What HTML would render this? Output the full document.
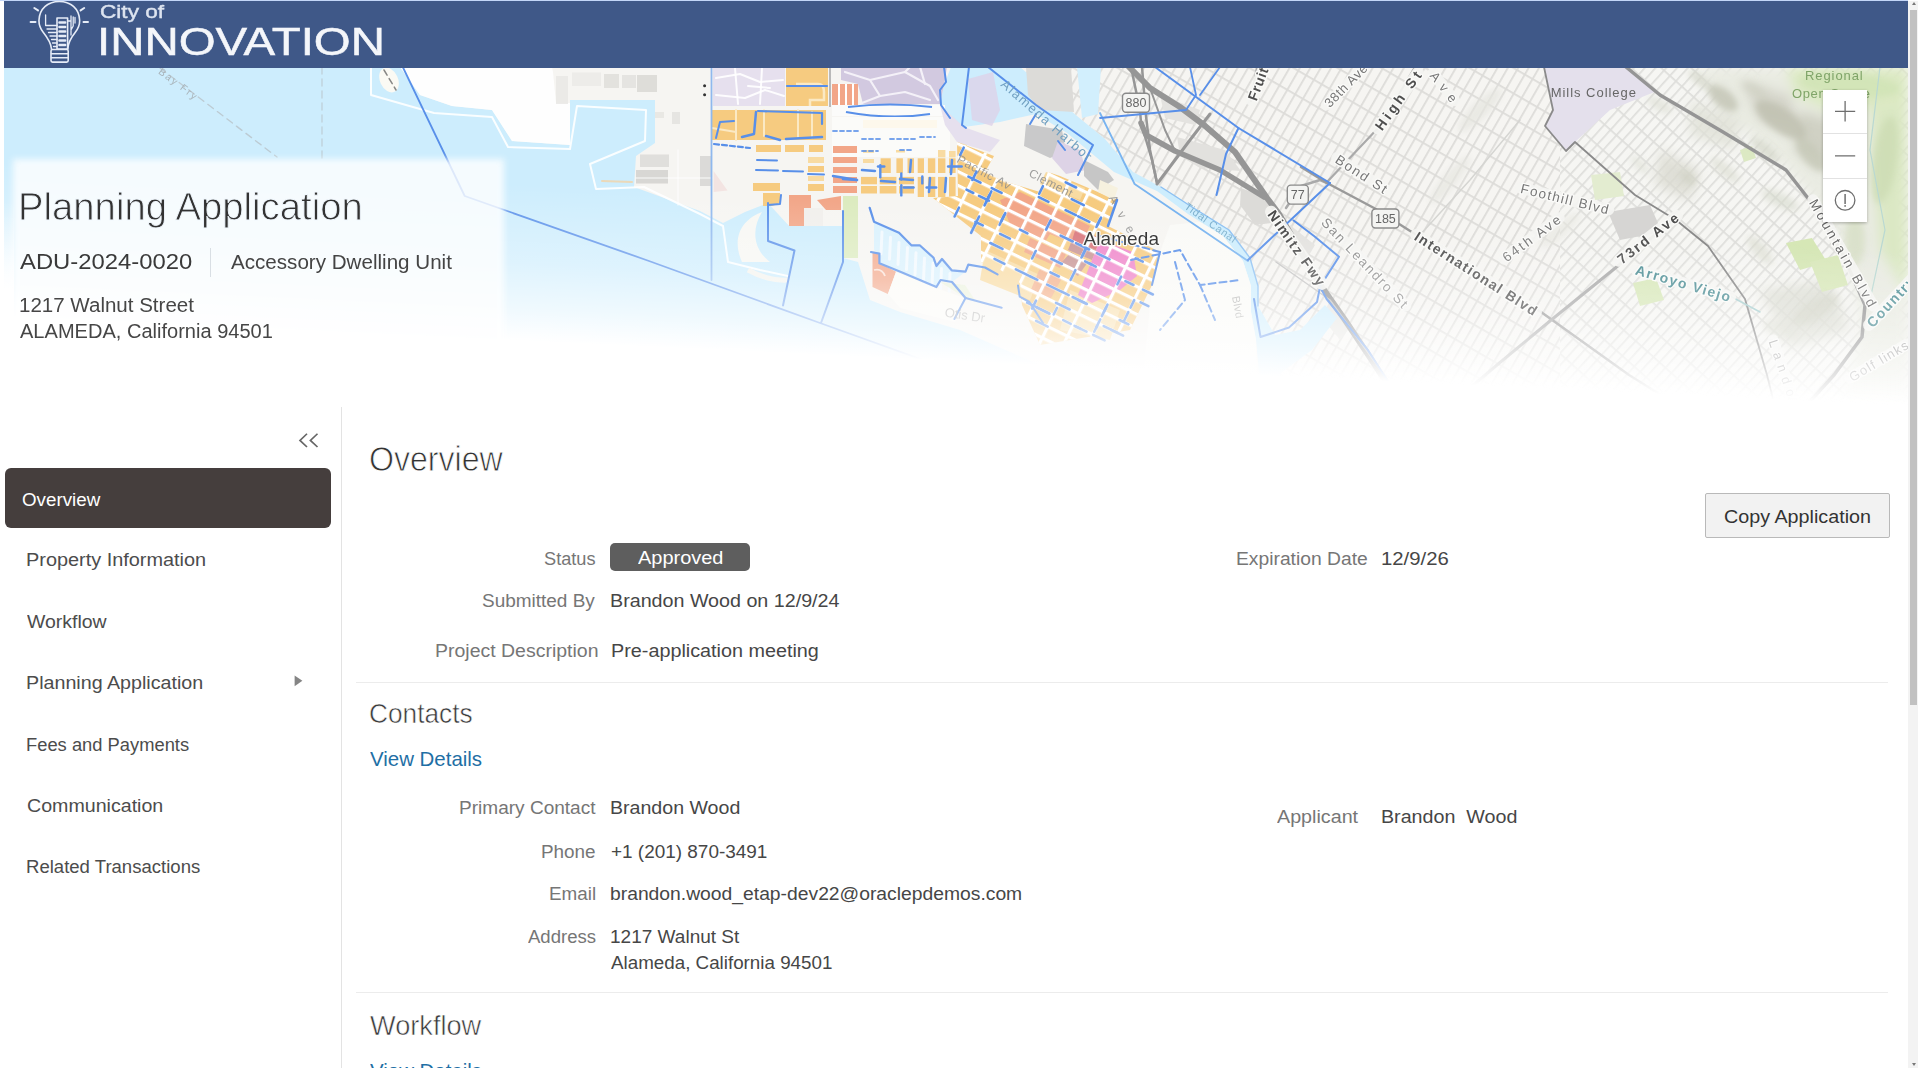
<!DOCTYPE html>
<html lang="en">
<head>
<meta charset="utf-8">
<title>Planning Application - ADU-2024-0020</title>
<style>
*{box-sizing:border-box;margin:0;padding:0}
html,body{width:1920px;height:1080px;overflow:hidden;background:#fff}
body{font-family:"Liberation Sans",sans-serif;color:#333;position:relative}
#app{position:absolute;left:4px;top:1px;width:1904px;height:1067px;overflow:hidden;background:#fff}
#hdr{position:absolute;left:0;top:0;width:1904px;height:67px;background:#3f5888;overflow:hidden}
#map{position:absolute;left:0;top:66px;width:1904px;height:340px;overflow:hidden}
#map svg{position:absolute;left:0;top:0}
.t{position:absolute;white-space:pre;line-height:1;transform-origin:0 0}
.b{position:absolute}
h1,h2{font-weight:400}
#sb{position:absolute;left:1908px;top:1px;width:10px;height:1067px;background:#f3f3f3}
#sb i{position:absolute;left:2px;top:9px;width:7px;height:695px;background:#c1c1c1}
.hr{position:absolute;height:1px;background:#ececec;left:352px;width:1532px}
</style>
</head>
<body>
<div id="topline" style="position:absolute;left:0;top:0;width:1908px;height:1px;background:#c3d6f8"></div>
<div id="app">
<div id="map">
<svg width="1904" height="340" viewBox="4 67 1904 340">
<defs>
<linearGradient id="fade" x1="0" y1="0" x2="0" y2="1"><stop offset="0" stop-color="#fff" stop-opacity="0"/><stop offset="0.5" stop-color="#fff" stop-opacity="0.34"/><stop offset="0.8" stop-color="#fff" stop-opacity="0.7"/><stop offset="0.93" stop-color="#fff" stop-opacity="0.9"/><stop offset="1" stop-color="#fff" stop-opacity="1"/></linearGradient>
<linearGradient id="heroL" x1="0" y1="0" x2="0" y2="1"><stop offset="0" stop-color="#fff" stop-opacity="0"/><stop offset="1" stop-color="#fff" stop-opacity="1"/></linearGradient>
<pattern id="oakgrid" width="9" height="22" patternUnits="userSpaceOnUse" patternTransform="rotate(30 1300 200)"><rect width="9" height="22" fill="#f6f5f2"/><rect x="0" y="0" width="9" height="1.8" fill="#dddcd9"/><rect x="0" y="0" width="1.8" height="22" fill="#dddcd9"/></pattern>
<pattern id="oakgrid2" width="8" height="20" patternUnits="userSpaceOnUse" patternTransform="rotate(42 1600 200)"><rect width="8" height="20" fill="#f6f6f3"/><rect x="0" y="0" width="8" height="1.7" fill="#dededb"/><rect x="0" y="0" width="1.7" height="20" fill="#dededb"/></pattern>
<pattern id="rotst" width="22" height="12.5" patternUnits="userSpaceOnUse" patternTransform="translate(1048 172) rotate(26)"><rect x="0" y="0" width="22" height="3.2" fill="#fff"/><rect x="0" y="0" width="3.2" height="12.5" fill="#fff"/></pattern>
<pattern id="axst" width="21" height="10.5" patternUnits="userSpaceOnUse" patternTransform="translate(858 144)"><rect x="0" y="0" width="21" height="3" fill="#fff"/><rect x="0" y="0" width="2.6" height="10.5" fill="#fff"/></pattern>
<filter id="b3"><feGaussianBlur stdDeviation="3"/></filter>
<filter id="b6"><feGaussianBlur stdDeviation="6"/></filter>
<filter id="b1"><feGaussianBlur stdDeviation="0.7"/></filter>
</defs>
<rect x="4.0" y="67.0" width="1904.0" height="340.0" fill="#f3f2ee" />
<polygon points="1020.0,67.0 1560.0,67.0 1560.0,407.0 1260.0,407.0 1258.0,300.0 1258.0,286.0 1250.0,258.0 1229.0,230.0 1192.0,207.0 1161.0,187.0 1133.0,172.0 1105.0,139.0 1077.0,116.0" fill="url(#oakgrid)" />
<polygon points="1560.0,67.0 1908.0,67.0 1908.0,407.0 1560.0,407.0" fill="url(#oakgrid2)" />
<g filter="url(#b6)">
<polygon points="1700.0,67.0 1908.0,67.0 1908.0,407.0 1840.0,407.0 1860.0,330.0 1850.0,260.0 1815.0,200.0 1770.0,150.0 1720.0,110.0" fill="#e9ebe2" />
<polygon points="1740.0,80.0 1790.0,95.0 1800.0,130.0 1760.0,120.0" fill="#cfd0c4" opacity="0.8" />
<polygon points="1800.0,110.0 1860.0,130.0 1840.0,175.0 1795.0,150.0" fill="#c9cabd" opacity="0.8" />
<polygon points="1660.0,150.0 1700.0,170.0 1690.0,200.0 1655.0,185.0" fill="#d9dad0" opacity="0.8" />
<polygon points="1760.0,290.0 1830.0,280.0 1850.0,330.0 1790.0,350.0" fill="#d6d7cc" opacity="0.7" />
<polygon points="1690.0,100.0 1740.0,120.0 1735.0,150.0 1690.0,135.0" fill="#dfe0d6" opacity="0.8" />
<polygon points="1870.0,67.0 1908.0,67.0 1908.0,300.0 1880.0,250.0 1872.0,150.0" fill="#dbe8c4" />
<polygon points="1786.0,67.0 1908.0,67.0 1908.0,105.0 1830.0,112.0 1795.0,95.0" fill="#dce9c3" />
</g>
<polygon points="1786.0,243.0 1812.0,238.0 1827.0,262.0 1800.0,270.0" fill="#d6e7b6" />
<polygon points="1810.0,262.0 1838.0,255.0 1848.0,285.0 1822.0,292.0" fill="#d9e8bb" />
<polygon points="1633.0,283.0 1656.0,278.0 1664.0,300.0 1640.0,306.0" fill="#d8e8ba" />
<polygon points="1591.0,175.0 1620.0,172.0 1624.0,196.0 1595.0,200.0" fill="#e3ecd0" />
<polygon points="1608.0,212.0 1650.0,205.0 1662.0,232.0 1620.0,240.0" fill="#d6d5d3" />
<polygon points="1740.0,150.0 1752.0,146.0 1756.0,158.0 1744.0,162.0" fill="#dce9c3" />
<g filter="url(#b3)">
<ellipse cx="1723" cy="98" rx="18" ry="9" fill="#c4c6b6" opacity="0.85" transform="rotate(40 1723 98)"/>
<ellipse cx="1781" cy="120" rx="30" ry="12" fill="#bfc1b0" opacity="0.85" transform="rotate(35 1781 120)"/>
<ellipse cx="1811" cy="155" rx="20" ry="9" fill="#c6c8b8" opacity="0.8" transform="rotate(50 1811 155)"/>
<ellipse cx="1688" cy="178" rx="10" ry="5" fill="#cfd1c4" opacity="0.8" transform="rotate(40 1688 178)"/>
<ellipse cx="1700" cy="80" rx="14" ry="5" fill="#d2d4c6" opacity="0.7" transform="rotate(40 1700 80)"/>
<ellipse cx="1755" cy="90" rx="14" ry="5" fill="#d0d2c4" opacity="0.7" transform="rotate(30 1755 90)"/>
<ellipse cx="1765" cy="150" rx="18" ry="6" fill="#d3d5c8" opacity="0.7" transform="rotate(40 1765 150)"/>
<ellipse cx="1835" cy="120" rx="16" ry="7" fill="#cdd0c0" opacity="0.7" transform="rotate(60 1835 120)"/>
<ellipse cx="1850" cy="185" rx="14" ry="8" fill="#ccd0bd" opacity="0.7" transform="rotate(40 1850 185)"/>
<ellipse cx="1725" cy="170" rx="18" ry="6" fill="#d8dacf" opacity="0.6" transform="rotate(40 1725 170)"/>
<ellipse cx="1780" cy="200" rx="20" ry="7" fill="#d6d8cc" opacity="0.6" transform="rotate(25 1780 200)"/>
<ellipse cx="1760" cy="250" rx="18" ry="7" fill="#d8dace" opacity="0.6" transform="rotate(50 1760 250)"/>
<ellipse cx="1815" cy="310" rx="26" ry="10" fill="#cfd1c3" opacity="0.65" transform="rotate(-30 1815 310)"/>
<ellipse cx="1780" cy="330" rx="18" ry="8" fill="#d7d9cd" opacity="0.6" transform="rotate(20 1780 330)"/>
<ellipse cx="1855" cy="240" rx="10" ry="26" fill="#d0dbbd" opacity="0.6" transform="rotate(0 1855 240)"/>
<ellipse cx="1885" cy="160" rx="12" ry="44" fill="#cbdbb2" opacity="0.75" transform="rotate(8 1885 160)"/>
<ellipse cx="1850" cy="85" rx="50" ry="12" fill="#cfe3b4" opacity="0.7" transform="rotate(5 1850 85)"/>
<ellipse cx="1660" cy="105" rx="14" ry="6" fill="#dcddd2" opacity="0.6" transform="rotate(30 1660 105)"/>
<ellipse cx="1640" cy="165" rx="12" ry="5" fill="#dedfd6" opacity="0.6" transform="rotate(45 1640 165)"/>
<ellipse cx="1480" cy="110" rx="30" ry="8" fill="#e4e4de" opacity="0.7" transform="rotate(-45 1480 110)"/>
<ellipse cx="1450" cy="180" rx="30" ry="7" fill="#e6e6e0" opacity="0.7" transform="rotate(-50 1450 180)"/>
<ellipse cx="1560" cy="230" rx="26" ry="7" fill="#e6e6e0" opacity="0.6" transform="rotate(-40 1560 230)"/>
</g>
<polygon points="1177.0,137.0 1225.0,150.0 1241.0,171.0 1200.0,168.0 1180.0,155.0" fill="#e2e1de" />
<polygon points="1241.0,188.0 1272.0,200.0 1280.0,222.0 1255.0,225.0 1240.0,205.0" fill="#dcdbd8" />
<polygon points="1160.0,95.0 1200.0,110.0 1195.0,125.0 1165.0,118.0" fill="#e4e3e0" />
<polygon points="1290.0,225.0 1315.0,245.0 1305.0,262.0 1285.0,245.0" fill="#e3e2df" />
<polygon points="1330.0,300.0 1352.0,325.0 1340.0,340.0 1322.0,318.0" fill="#e6e5e2" />
<polygon points="1544.0,67.0 1553.0,110.0 1545.0,126.0 1566.0,151.0 1575.0,142.0 1610.0,110.0 1657.0,91.0 1626.0,67.0" fill="#e4e0ec" />
<polygon points="4.0,67.0 1020.0,67.0 1077.0,116.0 1105.0,139.0 1133.0,172.0 1161.0,187.0 1192.0,207.0 1229.0,230.0 1250.0,258.0 1258.0,286.0 1258.0,306.0 1275.0,335.0 1300.0,330.0 1325.0,305.0 1337.0,318.0 1312.0,350.0 1282.0,372.0 1268.0,407.0 4.0,407.0" fill="#cdedfd" />
<polygon points="1077.0,67.0 1101.0,67.0 1098.0,114.0 1082.0,118.0" fill="#d2effd" />
<polygon points="400.0,67.0 951.0,67.0 944.0,85.0 940.0,105.0 950.0,118.0 964.0,127.0 1000.0,122.0 1036.0,114.0 1067.0,133.0 1090.0,152.0 1114.0,172.0 1157.0,191.0 1188.0,214.0 1223.0,236.0 1243.0,261.0 1251.0,286.0 1251.0,312.0 1256.0,340.0 1262.0,407.0 1100.0,407.0 1040.0,365.0 960.0,330.0 900.0,312.0 870.0,300.0 858.0,262.0 843.0,258.0 843.0,226.0 789.0,226.0 768.0,203.0 745.0,212.0 723.0,223.0 700.0,211.0 634.0,187.0 636.0,156.0 655.0,143.0 655.0,100.0 570.0,100.0 570.0,145.0 512.0,141.0 492.0,110.0 452.0,106.0 420.0,95.0" fill="#f6f5f2" />
<polygon points="400.0,67.0 552.0,67.0 553.0,72.0 556.0,103.0 570.0,103.0 570.0,145.0 512.0,141.0 492.0,110.0 452.0,106.0 420.0,95.0" fill="#fefefe" />
<ellipse cx="389" cy="80" rx="9" ry="13" fill="#fbfaf4" transform="rotate(-25 389 80)"/>
<polygon points="1026.0,67.0 1071.0,67.0 1074.0,112.0 1040.0,110.0 1028.0,95.0" fill="#dcdbd8" />
<polyline points="371.0,67.0 371.0,95.0 434.0,113.0 492.0,117.0 508.0,147.0 570.0,149.0 577.0,106.0 646.0,110.0 645.0,141.0 590.0,164.0 596.0,189.0 644.0,187.0 700.0,214.0 723.0,226.0 728.0,262.0 760.0,270.0 820.0,283.0" fill="none" stroke="#fff" stroke-width="2" stroke-linejoin="round" stroke-linecap="round" opacity="0.9" />
<path d="M742 262 C730 235 745 218 762 212 C752 228 752 248 770 262 Z" fill="#f7f7f3"/>
<path d="M748 270 C775 285 800 282 815 270" fill="none" stroke="#f3f3ee" stroke-width="5"/>
<rect x="572.0" y="72.5" width="29.0" height="13.5" fill="#ebeae7" opacity="0.85" />
<rect x="604.0" y="74.0" width="15.0" height="14.0" fill="#dfdedb" opacity="0.85" />
<rect x="622.0" y="75.0" width="14.0" height="13.0" fill="#e2e1de" opacity="0.85" />
<rect x="637.0" y="75.0" width="20.0" height="17.0" fill="#d9d8d5" opacity="0.85" />
<rect x="556.0" y="76.0" width="12.0" height="28.0" fill="#e9e8e5" opacity="0.85" />
<rect x="640.0" y="154.5" width="29.0" height="12.5" fill="#dcdbd8" opacity="0.85" />
<rect x="636.0" y="170.0" width="32.0" height="13.5" fill="#d2d1cf" opacity="0.85" />
<rect x="700.0" y="156.0" width="12.0" height="30.0" fill="#d6d5d3" opacity="0.85" />
<rect x="672.0" y="112.0" width="8.0" height="12.0" fill="#e3e2df" opacity="0.85" />
<rect x="655.0" y="112.0" width="9.0" height="6.0" fill="#e6e5e2" opacity="0.85" />
<polygon points="713.6,171.0 727.5,190.5 713.6,192.0" fill="#f3e4e2" />
<circle cx="704.6" cy="85.7" r="1.5" fill="#333"/><circle cx="704.6" cy="94.7" r="1.5" fill="#333"/>
<rect x="737.0" y="74.0" width="25.0" height="11.0" fill="#dbd4e6" />
<polyline points="636.0,178.0 712.0,178.0" fill="none" stroke="#fff" stroke-width="1.5" stroke-linejoin="round" stroke-linecap="round" opacity="0.6" />
<polyline points="678.0,150.0 678.0,205.0" fill="none" stroke="#fff" stroke-width="1.5" stroke-linejoin="round" stroke-linecap="round" opacity="0.6" />
<polyline points="602.0,181.0 632.0,182.0" fill="none" stroke="#f3d3a8" stroke-width="2" stroke-linejoin="round" stroke-linecap="round" opacity="0.8" />
<rect x="713.0" y="67.0" width="72.0" height="39.0" fill="#e6e0ee" />
<polyline points="716.0,78.0 740.0,74.0 760.0,82.0 783.0,80.0" fill="none" stroke="#fff" stroke-width="2" stroke-linejoin="round" stroke-linecap="round" opacity="0.9" />
<polyline points="716.0,95.0 745.0,98.0 765.0,90.0 784.0,96.0" fill="none" stroke="#fff" stroke-width="2" stroke-linejoin="round" stroke-linecap="round" opacity="0.9" />
<polyline points="735.0,68.0 738.0,104.0" fill="none" stroke="#fff" stroke-width="2" stroke-linejoin="round" stroke-linecap="round" opacity="0.9" />
<polyline points="762.0,68.0 760.0,104.0" fill="none" stroke="#fff" stroke-width="2" stroke-linejoin="round" stroke-linecap="round" opacity="0.9" />
<polyline points="748.0,86.0 770.0,88.0" fill="none" stroke="#fff" stroke-width="2" stroke-linejoin="round" stroke-linecap="round" opacity="0.9" />
<rect x="786.0" y="67.0" width="42.0" height="39.0" fill="#f6cb80" />
<path d="M796 84 L818 84 Q824 84 824 92 L824 100 L810 100 L810 106" fill="none" stroke="#fbe9c4" stroke-width="2.5"/>
<polyline points="787.0,86.0 827.0,86.0" fill="none" stroke="#588fe9" stroke-width="2.2" stroke-linejoin="round" stroke-linecap="round" />
<rect x="829.0" y="67.0" width="2.0" height="40.0" fill="#b9b9b9" />
<rect x="832.0" y="84.0" width="26.0" height="21.0" fill="#f2a688" />
<rect x="838.0" y="84.0" width="2.0" height="21.0" fill="#fff" />
<rect x="845.0" y="84.0" width="2.0" height="21.0" fill="#fff" />
<rect x="852.0" y="84.0" width="2.0" height="21.0" fill="#fff" />
<polygon points="841.0,67.0 947.0,67.0 944.0,85.0 940.0,104.0 863.0,104.0 858.0,84.0 841.0,80.0" fill="#d2c9e0" />
<polyline points="845.0,72.0 870.0,80.0 880.0,96.0 862.0,103.0" fill="none" stroke="#f4f1f8" stroke-width="2.2" stroke-linejoin="round" stroke-linecap="round" />
<polyline points="870.0,80.0 905.0,72.0 930.0,86.0 938.0,100.0" fill="none" stroke="#f4f1f8" stroke-width="2.2" stroke-linejoin="round" stroke-linecap="round" />
<polyline points="880.0,96.0 905.0,92.0 930.0,100.0" fill="none" stroke="#f4f1f8" stroke-width="2.2" stroke-linejoin="round" stroke-linecap="round" />
<polyline points="905.0,72.0 910.0,67.0" fill="none" stroke="#f4f1f8" stroke-width="2.2" stroke-linejoin="round" stroke-linecap="round" />
<polyline points="920.0,67.0 925.0,84.0" fill="none" stroke="#f4f1f8" stroke-width="2.2" stroke-linejoin="round" stroke-linecap="round" />
<rect x="832.0" y="105.0" width="113.0" height="11.0" fill="#fbfbfa" />
<path d="M848 107 Q890 102 932 107 M846 112 Q890 120 930 114" fill="none" stroke="#588fe9" stroke-width="2.2"/>
<rect x="712.0" y="110.0" width="114.0" height="30.0" fill="#f6cb80" />
<polyline points="736.0,110.0 736.0,140.0" fill="none" stroke="#fbe9c4" stroke-width="2" stroke-linejoin="round" stroke-linecap="round" />
<polyline points="764.0,110.0 764.0,136.0" fill="none" stroke="#fbe9c4" stroke-width="2" stroke-linejoin="round" stroke-linecap="round" />
<polyline points="798.0,110.0 798.0,138.0" fill="none" stroke="#fbe9c4" stroke-width="2" stroke-linejoin="round" stroke-linecap="round" />
<polyline points="712.0,128.0 736.0,132.0" fill="none" stroke="#fbe9c4" stroke-width="2" stroke-linejoin="round" stroke-linecap="round" />
<polyline points="812.0,112.0 812.0,138.0" fill="none" stroke="#fbe9c4" stroke-width="2" stroke-linejoin="round" stroke-linecap="round" />
<polyline points="716.0,138.0 720.0,122.0 734.0,121.0" fill="none" stroke="#588fe9" stroke-width="2" stroke-linejoin="round" stroke-linecap="round" />
<polyline points="756.0,112.0 754.0,134.0 742.0,137.0" fill="none" stroke="#588fe9" stroke-width="2.5" stroke-linejoin="round" stroke-linecap="round" />
<polyline points="766.0,136.0 780.0,140.0" fill="none" stroke="#588fe9" stroke-width="2.5" stroke-linejoin="round" stroke-linecap="round" />
<polyline points="786.0,139.0 822.0,137.0" fill="none" stroke="#588fe9" stroke-width="2.5" stroke-linejoin="round" stroke-linecap="round" />
<polyline points="758.0,111.0 822.0,113.0 822.0,124.0" fill="none" stroke="#588fe9" stroke-width="2.2" stroke-linejoin="round" stroke-linecap="round" />
<polyline points="714.0,144.0 750.0,148.0" fill="none" stroke="#588fe9" stroke-width="2.2" stroke-linejoin="round" stroke-linecap="round" stroke-dasharray="5 3" />
<rect x="756.0" y="145.0" width="25.0" height="7.0" fill="#f6cb80" />
<rect x="785.0" y="145.0" width="19.0" height="7.0" fill="#f6cb80" />
<rect x="809.0" y="145.0" width="14.0" height="7.0" fill="#f6cb80" />
<rect x="832.0" y="117.0" width="118.0" height="40.0" fill="#fbfbf9" />
<polyline points="756.0,170.0 778.0,170.5" fill="none" stroke="#588fe9" stroke-width="2" stroke-linejoin="round" stroke-linecap="round" />
<polyline points="783.0,171.0 803.0,171.5" fill="none" stroke="#588fe9" stroke-width="2" stroke-linejoin="round" stroke-linecap="round" />
<polyline points="808.0,174.0 824.0,174.5" fill="none" stroke="#588fe9" stroke-width="2" stroke-linejoin="round" stroke-linecap="round" />
<polyline points="757.0,160.0 777.0,160.5" fill="none" stroke="#588fe9" stroke-width="2" stroke-linejoin="round" stroke-linecap="round" />
<rect x="753.0" y="183.0" width="27.0" height="8.0" fill="#f6cb80" />
<rect x="808.0" y="157.0" width="16.0" height="6.0" fill="#f8dba2" />
<rect x="808.0" y="166.0" width="16.0" height="6.0" fill="#f6cb80" />
<rect x="808.0" y="176.0" width="16.0" height="5.0" fill="#f8dba2" />
<rect x="808.0" y="184.0" width="16.0" height="7.0" fill="#f6cb80" />
<rect x="833.0" y="146.0" width="24.0" height="7.0" fill="#f2a688" />
<rect x="833.0" y="157.0" width="24.0" height="6.0" fill="#f2a688" />
<rect x="833.0" y="167.0" width="24.0" height="6.0" fill="#f2a688" />
<rect x="833.0" y="177.0" width="24.0" height="6.0" fill="#f2a688" />
<rect x="833.0" y="186.0" width="24.0" height="7.0" fill="#f2a688" />
<polyline points="833.0,176.0 857.0,180.0" fill="none" stroke="#588fe9" stroke-width="2.5" stroke-linejoin="round" stroke-linecap="round" />
<rect x="863.0" y="120.0" width="74.0" height="8.0" fill="#fdf8ec" />
<rect x="880.6" y="158.3" width="10.2" height="14.7" fill="#f6cb80" />
<rect x="896.4" y="158.3" width="6.5" height="14.7" fill="#f6cb80" />
<rect x="907.5" y="158.3" width="6.5" height="14.7" fill="#f6cb80" />
<rect x="917.7" y="158.3" width="6.3" height="14.7" fill="#f6cb80" />
<rect x="927.9" y="158.3" width="7.4" height="14.7" fill="#f6cb80" />
<rect x="938.0" y="158.3" width="7.4" height="14.7" fill="#f6cb80" />
<rect x="949.0" y="158.3" width="6.6" height="14.7" fill="#f6cb80" />
<rect x="917.7" y="176.9" width="6.3" height="20.1" fill="#f6cb80" />
<rect x="927.9" y="176.9" width="7.4" height="20.1" fill="#f6cb80" />
<rect x="938.0" y="176.9" width="7.4" height="20.1" fill="#f6cb80" />
<rect x="949.0" y="176.9" width="6.6" height="20.1" fill="#f6cb80" />
<rect x="861.0" y="176.9" width="16.0" height="7.4" fill="#f6cb80" />
<rect x="861.0" y="186.0" width="16.0" height="7.5" fill="#f6cb80" />
<rect x="879.7" y="176.9" width="16.7" height="7.4" fill="#f6cb80" />
<rect x="879.7" y="186.0" width="16.7" height="7.5" fill="#f6cb80" />
<rect x="899.0" y="176.9" width="15.0" height="7.4" fill="#f6cb80" />
<rect x="899.0" y="186.0" width="15.0" height="7.5" fill="#f6cb80" />
<rect x="863.0" y="159.0" width="11.0" height="4.0" fill="#f8dba2" />
<rect x="863.0" y="150.0" width="11.0" height="2.8" fill="#f8dba2" />
<rect x="938.0" y="150.0" width="7.4" height="7.4" fill="#f8dba2" />
<rect x="949.0" y="151.0" width="6.6" height="6.4" fill="#f8dba2" />
<rect x="958.4" y="140.7" width="8.6" height="7.3" fill="#f8dba2" />
<rect x="896.0" y="150.0" width="9.0" height="2.5" fill="#f8dba2" />
<polyline points="833.0,131.0 858.0,131.0" fill="none" stroke="#588fe9" stroke-width="1.8" stroke-linejoin="round" stroke-linecap="round" opacity="0.8" stroke-dasharray="4 3" />
<polyline points="862.0,139.0 880.0,139.0" fill="none" stroke="#588fe9" stroke-width="1.8" stroke-linejoin="round" stroke-linecap="round" opacity="0.8" stroke-dasharray="4 3" />
<polyline points="890.0,139.0 915.0,139.0" fill="none" stroke="#588fe9" stroke-width="1.8" stroke-linejoin="round" stroke-linecap="round" opacity="0.8" stroke-dasharray="4 3" />
<polyline points="920.0,137.0 935.0,137.0" fill="none" stroke="#588fe9" stroke-width="1.8" stroke-linejoin="round" stroke-linecap="round" opacity="0.8" stroke-dasharray="4 3" />
<polyline points="862.0,151.0 878.0,151.0" fill="none" stroke="#588fe9" stroke-width="1.8" stroke-linejoin="round" stroke-linecap="round" opacity="0.8" stroke-dasharray="4 3" />
<polyline points="900.0,150.0 912.0,150.0" fill="none" stroke="#588fe9" stroke-width="1.8" stroke-linejoin="round" stroke-linecap="round" opacity="0.8" stroke-dasharray="4 3" />
<polyline points="911.0,160.0 910.0,172.0" fill="none" stroke="#588fe9" stroke-width="2.5" stroke-linejoin="round" stroke-linecap="round" />
<polyline points="952.0,160.0 951.0,174.0" fill="none" stroke="#588fe9" stroke-width="2.5" stroke-linejoin="round" stroke-linecap="round" />
<polyline points="930.0,178.0 929.0,192.0" fill="none" stroke="#588fe9" stroke-width="2.5" stroke-linejoin="round" stroke-linecap="round" />
<polyline points="946.0,178.0 945.0,192.0" fill="none" stroke="#588fe9" stroke-width="2.5" stroke-linejoin="round" stroke-linecap="round" />
<polyline points="862.0,170.0 875.0,171.0" fill="none" stroke="#588fe9" stroke-width="2.5" stroke-linejoin="round" stroke-linecap="round" />
<polyline points="881.0,181.0 895.0,182.0" fill="none" stroke="#588fe9" stroke-width="2.5" stroke-linejoin="round" stroke-linecap="round" />
<polyline points="900.0,179.0 913.0,180.0" fill="none" stroke="#588fe9" stroke-width="2.5" stroke-linejoin="round" stroke-linecap="round" />
<polyline points="843.0,179.0 857.0,180.0" fill="none" stroke="#588fe9" stroke-width="2.5" stroke-linejoin="round" stroke-linecap="round" />
<polygon points="763.0,193.0 780.0,193.0 780.0,203.0 772.0,206.0 763.0,206.0" fill="#f6cb80" />
<polygon points="789.0,195.0 811.0,195.0 811.0,208.0 804.0,208.0 804.0,226.0 789.0,226.0" fill="#f2a688" />
<rect x="804.0" y="208.0" width="19.0" height="18.0" fill="#f1efec" />
<polygon points="817.0,200.0 841.0,196.0 841.0,210.0 826.0,210.0" fill="#f2a688" />
<rect x="843.0" y="196.0" width="15.0" height="62.0" fill="#dcebbf" />
<polygon points="768.0,206.0 789.0,226.0 843.0,226.0 843.0,300.0 783.0,305.0 794.0,250.0 768.0,241.0" fill="#cdedfd" />
<polygon points="874.0,221.7 899.0,232.8 911.4,245.3 919.7,245.3 933.6,257.8 936.4,266.0 942.0,259.0 951.7,270.3 965.5,271.7 952.0,282.0 940.6,280.0 936.4,287.0 900.3,271.7 879.4,263.3 879.4,253.6 874.0,250.0" fill="#d9f1fd" />
<polyline points="882.0,232.0 881.0,254.0" fill="none" stroke="#f4fafe" stroke-width="3" stroke-linejoin="round" stroke-linecap="round" opacity="0.9" />
<polyline points="890.5,237.2 889.5,259.2" fill="none" stroke="#f4fafe" stroke-width="3" stroke-linejoin="round" stroke-linecap="round" opacity="0.9" />
<polyline points="899.0,242.4 898.0,264.4" fill="none" stroke="#f4fafe" stroke-width="3" stroke-linejoin="round" stroke-linecap="round" opacity="0.9" />
<polyline points="907.5,247.6 906.5,269.6" fill="none" stroke="#f4fafe" stroke-width="3" stroke-linejoin="round" stroke-linecap="round" opacity="0.9" />
<polyline points="916.0,252.8 915.0,274.8" fill="none" stroke="#f4fafe" stroke-width="3" stroke-linejoin="round" stroke-linecap="round" opacity="0.9" />
<polyline points="924.5,258.0 923.5,280.0" fill="none" stroke="#f4fafe" stroke-width="3" stroke-linejoin="round" stroke-linecap="round" opacity="0.9" />
<polyline points="933.0,263.2 932.0,285.2" fill="none" stroke="#f4fafe" stroke-width="3" stroke-linejoin="round" stroke-linecap="round" opacity="0.9" />
<polyline points="941.5,268.4 940.5,290.4" fill="none" stroke="#f4fafe" stroke-width="3" stroke-linejoin="round" stroke-linecap="round" opacity="0.9" />
<polyline points="950.0,273.6 949.0,295.6" fill="none" stroke="#f4fafe" stroke-width="3" stroke-linejoin="round" stroke-linecap="round" opacity="0.9" />
<polygon points="872.5,252.0 879.4,253.6 879.4,263.0 896.0,271.7 887.8,294.0 872.5,287.0" fill="#f2a688" />
<path d="M874 270 Q882 268 885 276" fill="none" stroke="#fbe3d8" stroke-width="1.8"/>
<polygon points="896.0,272.0 936.0,288.0 965.0,298.0 955.0,322.0 900.0,308.0 888.0,294.0" fill="#fbfaf6" />
<polygon points="940.0,282.0 965.0,285.0 975.0,300.0 965.5,298.0" fill="#e9f1d8" opacity="0.8" />
<g>
<polygon points="957.0,142.0 994.0,156.0 985.0,172.0 1000.0,180.0 1020.0,186.0 1040.0,192.0 1048.0,172.0 1060.0,176.0 1117.0,200.0 1108.0,226.0 1160.0,252.0 1152.0,285.0 1130.0,330.0 1040.0,345.0 1022.0,305.0 1020.0,283.0 999.0,269.0 981.0,262.0 981.0,236.0 933.0,198.0 958.0,196.0" fill="#f6cb80" />
<polygon points="985.0,250.0 1040.0,275.0 1030.0,300.0 980.0,280.0" fill="#f8dba2" />
<polygon points="1046.0,172.0 1085.0,188.0 1080.0,200.0 1040.0,184.0" fill="#f8dba2" />
<polygon points="1070.0,290.0 1120.0,310.0 1110.0,340.0 1060.0,330.0" fill="#f8dba2" />
<polygon points="1000.0,200.0 1020.0,192.0 1090.0,226.0 1080.0,246.0 1050.0,234.0 1045.0,242.0 1010.0,224.0" fill="#f2a688" />
<polygon points="1030.0,238.0 1066.0,254.0 1060.0,268.0 1024.0,252.0" fill="#f2a688" />
<polygon points="1040.0,268.0 1062.0,278.0 1050.0,300.0 1030.0,292.0" fill="#f2a688" opacity="0.8" />
<polygon points="1071.0,252.0 1088.0,262.0 1078.0,276.0 1061.0,263.0" fill="#c79292" />
<polygon points="1076.0,228.0 1100.0,238.0 1096.0,250.0 1072.0,240.0" fill="#d9747a" />
<polygon points="1072.0,240.0 1096.0,250.0 1092.0,260.0 1068.0,250.0" fill="#c79292" />
<polygon points="1100.0,240.0 1133.0,252.0 1137.0,276.0 1120.0,290.0 1092.0,303.0 1078.0,295.0 1088.0,270.0" fill="#ef84c9" />
</g>
<polygon points="957.0,142.0 994.0,156.0 985.0,172.0 1000.0,180.0 1020.0,186.0 1040.0,192.0 1048.0,172.0 1060.0,176.0 1117.0,200.0 1108.0,226.0 1160.0,252.0 1152.0,285.0 1130.0,330.0 1040.0,345.0 1022.0,305.0 1020.0,283.0 999.0,269.0 981.0,262.0 981.0,236.0 933.0,198.0 958.0,196.0" fill="url(#rotst)" />
<polygon points="968.0,79.0 993.0,72.0 1000.0,110.0 992.0,126.0 972.0,120.0" fill="#ddd2e8" opacity="0.8" />
<polygon points="940.0,105.0 964.0,127.0 1000.0,140.0 990.0,152.0 957.0,142.0 945.0,125.0" fill="#e6e0ee" />
<polygon points="1026.0,124.0 1062.0,130.0 1066.0,152.0 1050.0,158.0 1024.0,146.0" fill="#c9c9ca" />
<polygon points="1058.0,141.0 1080.0,150.0 1086.0,170.0 1066.0,174.0 1052.0,158.0" fill="#ddd3e6" />
<polygon points="1084.0,160.0 1108.0,172.0 1114.0,180.0 1098.0,190.0 1084.0,176.0" fill="#c6c6c6" />
<polygon points="1100.0,180.0 1118.0,188.0 1114.0,200.0 1098.0,192.0" fill="#f6f1df" />
<polygon points="1160.0,252.0 1170.0,225.0 1200.0,222.0 1223.0,236.0 1243.0,261.0 1251.0,286.0 1251.0,312.0 1256.0,340.0 1258.0,407.0 1140.0,407.0 1152.0,285.0" fill="#fafaf7" />
<polyline points="1129.0,67.0 1150.0,88.0 1180.0,107.0 1204.0,125.0 1235.0,152.0 1267.0,198.0 1279.0,214.0 1300.0,250.0 1317.0,280.0 1345.0,320.0 1371.0,359.0 1400.0,404.0" fill="none" stroke="#969696" stroke-width="6" stroke-linejoin="round" stroke-linecap="round" />
<polyline points="1141.0,123.0 1146.0,135.0 1175.0,151.0 1220.0,170.0 1264.0,197.0" fill="none" stroke="#969696" stroke-width="5.5" stroke-linejoin="round" stroke-linecap="round" />
<polyline points="1142.0,67.0 1146.0,116.0 1150.0,150.0 1157.0,183.0" fill="none" stroke="#969696" stroke-width="2.5" stroke-linejoin="round" stroke-linecap="round" />
<polyline points="1131.0,67.0 1140.0,110.0 1141.0,123.0 1152.0,160.0 1157.0,183.0" fill="none" stroke="#969696" stroke-width="2.5" stroke-linejoin="round" stroke-linecap="round" />
<polyline points="1210.0,114.0 1190.0,140.0 1157.0,184.0" fill="none" stroke="#969696" stroke-width="3" stroke-linejoin="round" stroke-linecap="round" />
<polyline points="1150.0,88.0 1165.0,130.0 1175.0,151.0" fill="none" stroke="#969696" stroke-width="2" stroke-linejoin="round" stroke-linecap="round" />
<polyline points="1286.0,208.0 1301.0,186.0 1320.0,180.0 1327.0,183.0" fill="none" stroke="#aaa" stroke-width="2.5" stroke-linejoin="round" stroke-linecap="round" />
<polyline points="1327.0,182.0 1380.0,126.0 1415.0,67.0" fill="none" stroke="#aaa" stroke-width="2.2" stroke-linejoin="round" stroke-linecap="round" />
<polyline points="1251.0,101.0 1257.0,67.0" fill="none" stroke="#aaa" stroke-width="2.2" stroke-linejoin="round" stroke-linecap="round" />
<polyline points="1301.0,167.0 1327.0,183.0 1374.0,208.0 1418.0,236.0 1541.0,312.0 1629.0,375.0 1680.0,407.0" fill="none" stroke="#9a9a9a" stroke-width="2.5" stroke-linejoin="round" stroke-linecap="round" />
<polyline points="1676.0,217.0 1619.0,265.0 1550.0,321.0 1497.0,365.0 1450.0,405.0" fill="none" stroke="#aaa" stroke-width="3" stroke-linejoin="round" stroke-linecap="round" />
<polyline points="1626.0,67.0 1660.0,95.0 1723.0,132.0 1786.0,170.0 1818.0,211.0 1843.0,255.0 1865.0,305.0 1862.0,337.0 1834.0,375.0 1805.0,407.0" fill="none" stroke="#959595" stroke-width="3.5" stroke-linejoin="round" stroke-linecap="round" />
<polyline points="1544.0,67.0 1553.0,110.0 1545.0,126.0 1566.0,151.0 1575.0,142.0 1635.0,195.0 1676.0,220.0 1708.0,246.0 1745.0,299.0 1767.0,375.0 1775.0,407.0" fill="none" stroke="#8a8a8a" stroke-width="1.8" stroke-linejoin="round" stroke-linecap="round" />
<polyline points="1276.0,262.0 1330.0,300.0 1395.0,390.0" fill="none" stroke="#c4c4c4" stroke-width="1.5" stroke-linejoin="round" stroke-linecap="round" />
<polyline points="1420.0,235.0 1470.0,180.0 1520.0,120.0" fill="none" stroke="#d5d5d2" stroke-width="1.5" stroke-linejoin="round" stroke-linecap="round" />
<polyline points="1680.0,283.0 1700.0,292.0 1730.0,296.0 1760.0,312.0" fill="none" stroke="#a8cfd0" stroke-width="1.5" stroke-linejoin="round" stroke-linecap="round" />
<polyline points="1880.0,67.0 1870.0,150.0 1885.0,230.0 1870.0,300.0" fill="none" stroke="#b9d8d2" stroke-width="1.2" stroke-linejoin="round" stroke-linecap="round" />
<polyline points="402.8,67.0 464.7,196.0 649.0,261.0 820.0,323.0 1040.0,402.0" fill="none" stroke="#588fe9" stroke-width="1.8" stroke-linejoin="round" stroke-linecap="round" />
<polyline points="711.5,67.0 711.5,280.0" fill="none" stroke="#8fb8ee" stroke-width="1.8" stroke-linejoin="round" stroke-linecap="round" />
<polyline points="768.0,203.0 768.0,241.0 794.5,250.5 783.0,305.5" fill="none" stroke="#588fe9" stroke-width="2" stroke-linejoin="round" stroke-linecap="round" />
<polyline points="843.0,211.0 843.0,262.0 821.0,323.0" fill="none" stroke="#588fe9" stroke-width="2" stroke-linejoin="round" stroke-linecap="round" />
<polyline points="768.0,205.0 780.0,204.0 781.0,195.0" fill="none" stroke="#588fe9" stroke-width="2" stroke-linejoin="round" stroke-linecap="round" />
<polyline points="869.7,207.8 874.0,221.7 899.0,232.8 911.4,245.3 919.7,245.3 933.6,257.8 936.4,266.0 942.0,259.0 951.7,270.3 965.5,271.7 968.3,264.7 985.0,267.5 997.5,274.4" fill="none" stroke="#588fe9" stroke-width="2.2" stroke-linejoin="round" stroke-linecap="round" />
<polyline points="871.0,252.0 879.4,253.6 879.4,263.3 900.3,271.7 936.4,287.0 940.6,280.0 952.0,282.0 965.5,298.0" fill="none" stroke="#588fe9" stroke-width="2.2" stroke-linejoin="round" stroke-linecap="round" />
<polyline points="965.5,298.0 1001.7,307.8" fill="none" stroke="#588fe9" stroke-width="2" stroke-linejoin="round" stroke-linecap="round" />
<polyline points="965.5,298.0 954.4,319.0" fill="none" stroke="#588fe9" stroke-width="2" stroke-linejoin="round" stroke-linecap="round" />
<polyline points="1018.0,285.5 1019.7,296.7 1029.4,302.0 1043.0,323.0" fill="none" stroke="#588fe9" stroke-width="2" stroke-linejoin="round" stroke-linecap="round" />
<polyline points="944.0,67.0 946.0,82.0 940.0,90.0 941.0,105.0 950.0,118.0" fill="none" stroke="#588fe9" stroke-width="2" stroke-linejoin="round" stroke-linecap="round" />
<polyline points="969.0,67.0 962.0,125.0 966.0,128.0" fill="none" stroke="#588fe9" stroke-width="2" stroke-linejoin="round" stroke-linecap="round" />
<polyline points="988.0,67.0 1036.0,105.0 1093.0,145.0 1078.0,175.0" fill="none" stroke="#588fe9" stroke-width="2" stroke-linejoin="round" stroke-linecap="round" />
<polyline points="1036.0,114.0 1030.0,124.0" fill="none" stroke="#588fe9" stroke-width="2" stroke-linejoin="round" stroke-linecap="round" />
<polyline points="1065.0,150.0 1058.0,141.0" fill="none" stroke="#588fe9" stroke-width="2" stroke-linejoin="round" stroke-linecap="round" />
<polyline points="1100.0,113.0 1134.6,184.0 1248.0,261.0" fill="none" stroke="#79b4f0" stroke-width="1.8" stroke-linejoin="round" stroke-linecap="round" />
<polyline points="1161.0,187.0 1192.0,207.0 1229.0,230.0 1250.0,258.0 1258.0,286.0 1258.0,306.0" fill="none" stroke="#8cc0f2" stroke-width="1.4" stroke-linejoin="round" stroke-linecap="round" />
<polyline points="1155.0,67.0 1238.5,128.0 1330.0,183.0" fill="none" stroke="#588fe9" stroke-width="2" stroke-linejoin="round" stroke-linecap="round" />
<polyline points="1238.5,128.0 1226.0,154.0 1216.5,195.0" fill="none" stroke="#588fe9" stroke-width="2" stroke-linejoin="round" stroke-linecap="round" />
<polyline points="1330.0,183.0 1248.0,260.0" fill="none" stroke="#588fe9" stroke-width="2" stroke-linejoin="round" stroke-linecap="round" />
<polyline points="1190.0,67.0 1196.0,95.0 1186.0,110.0 1100.0,118.0" fill="none" stroke="#588fe9" stroke-width="1.8" stroke-linejoin="round" stroke-linecap="round" />
<polyline points="1220.0,67.0 1200.0,95.0" fill="none" stroke="#588fe9" stroke-width="1.8" stroke-linejoin="round" stroke-linecap="round" />
<polyline points="1293.6,220.5 1314.0,236.0 1339.0,256.7 1320.0,286.6 1326.6,299.0 1367.6,349.6 1400.0,400.0" fill="none" stroke="#588fe9" stroke-width="2" stroke-linejoin="round" stroke-linecap="round" />
<polyline points="1320.0,287.0 1317.0,302.0 1289.0,327.5 1260.5,337.0 1254.0,299.0" fill="none" stroke="#588fe9" stroke-width="2" stroke-linejoin="round" stroke-linecap="round" />
<polyline points="1117.0,200.0 1108.0,226.0" fill="none" stroke="#588fe9" stroke-width="2.5" stroke-linejoin="round" stroke-linecap="round" />
<polyline points="1160.0,252.0 1152.0,285.0" fill="none" stroke="#588fe9" stroke-width="2" stroke-linejoin="round" stroke-linecap="round" />
<polyline points="1131.0,260.0 1180.0,250.0 1200.0,285.0 1240.0,280.0" fill="none" stroke="#588fe9" stroke-width="2" stroke-linejoin="round" stroke-linecap="round" stroke-dasharray="7 4" />
<polyline points="1175.0,262.0 1185.0,300.0 1160.0,330.0" fill="none" stroke="#588fe9" stroke-width="2" stroke-linejoin="round" stroke-linecap="round" stroke-dasharray="7 4" />
<polyline points="1200.0,285.0 1215.0,320.0" fill="none" stroke="#588fe9" stroke-width="2" stroke-linejoin="round" stroke-linecap="round" stroke-dasharray="7 4" />
<polyline points="1100.0,236.0 1160.0,252.0" fill="none" stroke="#588fe9" stroke-width="2" stroke-linejoin="round" stroke-linecap="round" stroke-dasharray="7 4" />
<polyline points="1035.7,251.0 1032.1,258.5" fill="none" stroke="#588fe9" stroke-width="2.6" stroke-linejoin="round" stroke-linecap="round" />
<polyline points="1051.4,258.9 1061.9,264.0" fill="none" stroke="#588fe9" stroke-width="2.6" stroke-linejoin="round" stroke-linecap="round" />
<polyline points="1078.2,299.8 1086.9,304.0" fill="none" stroke="#588fe9" stroke-width="2.6" stroke-linejoin="round" stroke-linecap="round" />
<polyline points="1085.1,261.4 1091.5,264.5" fill="none" stroke="#588fe9" stroke-width="2.6" stroke-linejoin="round" stroke-linecap="round" />
<polyline points="979.0,195.8 989.0,200.7" fill="none" stroke="#588fe9" stroke-width="2.6" stroke-linejoin="round" stroke-linecap="round" />
<polyline points="1037.4,307.7 1048.9,313.3" fill="none" stroke="#588fe9" stroke-width="2.6" stroke-linejoin="round" stroke-linecap="round" />
<polyline points="1050.4,272.3 1058.9,276.5" fill="none" stroke="#588fe9" stroke-width="2.6" stroke-linejoin="round" stroke-linecap="round" />
<polyline points="1125.4,281.1 1133.5,285.0" fill="none" stroke="#588fe9" stroke-width="2.6" stroke-linejoin="round" stroke-linecap="round" />
<polyline points="1101.0,217.6 1097.5,224.7" fill="none" stroke="#588fe9" stroke-width="2.6" stroke-linejoin="round" stroke-linecap="round" />
<polyline points="958.9,207.7 954.6,216.5" fill="none" stroke="#588fe9" stroke-width="2.6" stroke-linejoin="round" stroke-linecap="round" />
<polyline points="966.5,189.7 973.3,193.0" fill="none" stroke="#588fe9" stroke-width="2.6" stroke-linejoin="round" stroke-linecap="round" />
<polyline points="1060.6,235.6 1072.8,241.5" fill="none" stroke="#588fe9" stroke-width="2.6" stroke-linejoin="round" stroke-linecap="round" />
<polyline points="988.9,196.4 984.5,205.4" fill="none" stroke="#588fe9" stroke-width="2.6" stroke-linejoin="round" stroke-linecap="round" />
<polyline points="979.1,216.5 975.1,224.8" fill="none" stroke="#588fe9" stroke-width="2.6" stroke-linejoin="round" stroke-linecap="round" />
<polyline points="989.8,194.6 986.5,201.4" fill="none" stroke="#588fe9" stroke-width="2.6" stroke-linejoin="round" stroke-linecap="round" />
<polyline points="994.5,258.9 1004.5,263.8" fill="none" stroke="#588fe9" stroke-width="2.6" stroke-linejoin="round" stroke-linecap="round" />
<polyline points="1063.2,320.2 1070.7,323.9" fill="none" stroke="#588fe9" stroke-width="2.6" stroke-linejoin="round" stroke-linecap="round" />
<polyline points="1140.6,302.4 1148.4,306.2" fill="none" stroke="#588fe9" stroke-width="2.6" stroke-linejoin="round" stroke-linecap="round" />
<polyline points="1103.7,326.1 1117.7,332.9" fill="none" stroke="#588fe9" stroke-width="2.6" stroke-linejoin="round" stroke-linecap="round" />
<polyline points="1135.7,258.3 1142.8,261.7" fill="none" stroke="#588fe9" stroke-width="2.6" stroke-linejoin="round" stroke-linecap="round" />
<polyline points="1071.7,199.2 1083.8,205.1" fill="none" stroke="#588fe9" stroke-width="2.6" stroke-linejoin="round" stroke-linecap="round" />
<polyline points="1057.0,307.8 1053.7,314.5" fill="none" stroke="#588fe9" stroke-width="2.6" stroke-linejoin="round" stroke-linecap="round" />
<polyline points="975.4,221.8 982.8,225.4" fill="none" stroke="#588fe9" stroke-width="2.6" stroke-linejoin="round" stroke-linecap="round" />
<polyline points="1089.3,263.4 1095.8,266.7" fill="none" stroke="#588fe9" stroke-width="2.6" stroke-linejoin="round" stroke-linecap="round" />
<polyline points="1093.1,334.9 1104.6,340.4" fill="none" stroke="#588fe9" stroke-width="2.6" stroke-linejoin="round" stroke-linecap="round" />
<polyline points="1047.1,284.6 1061.5,291.6" fill="none" stroke="#588fe9" stroke-width="2.6" stroke-linejoin="round" stroke-linecap="round" />
<polyline points="1100.3,319.3 1096.1,327.9" fill="none" stroke="#588fe9" stroke-width="2.6" stroke-linejoin="round" stroke-linecap="round" />
<polyline points="1111.3,329.8 1123.1,335.6" fill="none" stroke="#588fe9" stroke-width="2.6" stroke-linejoin="round" stroke-linecap="round" />
<polyline points="1036.0,300.6 1032.1,308.6" fill="none" stroke="#588fe9" stroke-width="2.6" stroke-linejoin="round" stroke-linecap="round" />
<polyline points="1078.2,216.3 1089.4,221.8" fill="none" stroke="#588fe9" stroke-width="2.6" stroke-linejoin="round" stroke-linecap="round" />
<polyline points="1100.3,219.0 1096.4,227.0" fill="none" stroke="#588fe9" stroke-width="2.6" stroke-linejoin="round" stroke-linecap="round" />
<polyline points="1037.1,307.6 1049.5,313.6" fill="none" stroke="#588fe9" stroke-width="2.6" stroke-linejoin="round" stroke-linecap="round" />
<polyline points="1042.9,186.2 1039.2,193.8" fill="none" stroke="#588fe9" stroke-width="2.6" stroke-linejoin="round" stroke-linecap="round" />
<polyline points="1074.5,325.8 1080.8,328.9" fill="none" stroke="#588fe9" stroke-width="2.6" stroke-linejoin="round" stroke-linecap="round" />
<polyline points="976.5,171.7 972.4,180.0" fill="none" stroke="#588fe9" stroke-width="2.6" stroke-linejoin="round" stroke-linecap="round" />
<polyline points="1036.1,320.9 1047.7,326.6" fill="none" stroke="#588fe9" stroke-width="2.6" stroke-linejoin="round" stroke-linecap="round" />
<polyline points="975.7,223.4 971.1,232.9" fill="none" stroke="#588fe9" stroke-width="2.6" stroke-linejoin="round" stroke-linecap="round" />
<polyline points="1065.6,210.2 1075.9,215.2" fill="none" stroke="#588fe9" stroke-width="2.6" stroke-linejoin="round" stroke-linecap="round" />
<polyline points="1128.3,312.1 1123.6,321.7" fill="none" stroke="#588fe9" stroke-width="2.6" stroke-linejoin="round" stroke-linecap="round" />
<polyline points="1038.8,197.1 1048.5,201.8" fill="none" stroke="#588fe9" stroke-width="2.6" stroke-linejoin="round" stroke-linecap="round" />
<polyline points="1076.0,243.1 1089.1,249.5" fill="none" stroke="#588fe9" stroke-width="2.6" stroke-linejoin="round" stroke-linecap="round" />
<polyline points="1096.8,253.2 1109.5,259.4" fill="none" stroke="#588fe9" stroke-width="2.6" stroke-linejoin="round" stroke-linecap="round" />
<polyline points="963.7,147.7 960.1,155.1" fill="none" stroke="#588fe9" stroke-width="2.6" stroke-linejoin="round" stroke-linecap="round" />
<polyline points="1075.4,270.1 1070.6,279.8" fill="none" stroke="#588fe9" stroke-width="2.6" stroke-linejoin="round" stroke-linecap="round" />
<polyline points="1005.3,213.1 1001.5,220.8" fill="none" stroke="#588fe9" stroke-width="2.6" stroke-linejoin="round" stroke-linecap="round" />
<polyline points="1072.6,297.0 1085.3,303.2" fill="none" stroke="#588fe9" stroke-width="2.6" stroke-linejoin="round" stroke-linecap="round" />
<polyline points="1142.9,289.6 1152.9,294.5" fill="none" stroke="#588fe9" stroke-width="2.6" stroke-linejoin="round" stroke-linecap="round" />
<polyline points="1075.6,326.3 1086.5,331.6" fill="none" stroke="#588fe9" stroke-width="2.6" stroke-linejoin="round" stroke-linecap="round" />
<polyline points="1134.2,300.1 1130.5,307.6" fill="none" stroke="#588fe9" stroke-width="2.6" stroke-linejoin="round" stroke-linecap="round" />
<polyline points="1106.1,307.6 1101.8,316.2" fill="none" stroke="#588fe9" stroke-width="2.6" stroke-linejoin="round" stroke-linecap="round" />
<polyline points="1056.0,302.9 1069.7,309.5" fill="none" stroke="#588fe9" stroke-width="2.6" stroke-linejoin="round" stroke-linecap="round" />
<polyline points="1062.1,291.9 1068.7,295.1" fill="none" stroke="#588fe9" stroke-width="2.6" stroke-linejoin="round" stroke-linecap="round" />
<polyline points="968.4,176.7 980.5,182.6" fill="none" stroke="#588fe9" stroke-width="2.6" stroke-linejoin="round" stroke-linecap="round" />
<polyline points="1121.1,276.7 1117.4,284.3" fill="none" stroke="#588fe9" stroke-width="2.6" stroke-linejoin="round" stroke-linecap="round" />
<polyline points="990.3,243.0 1002.5,248.9" fill="none" stroke="#588fe9" stroke-width="2.6" stroke-linejoin="round" stroke-linecap="round" />
<polyline points="1086.1,248.2 1082.2,256.1" fill="none" stroke="#588fe9" stroke-width="2.6" stroke-linejoin="round" stroke-linecap="round" />
<polyline points="1004.2,215.3 999.6,224.8" fill="none" stroke="#588fe9" stroke-width="2.6" stroke-linejoin="round" stroke-linecap="round" />
<polyline points="1065.7,182.4 1076.1,187.5" fill="none" stroke="#588fe9" stroke-width="2.6" stroke-linejoin="round" stroke-linecap="round" />
<polyline points="1027.1,302.7 1037.4,307.7" fill="none" stroke="#588fe9" stroke-width="2.6" stroke-linejoin="round" stroke-linecap="round" />
<polyline points="1050.8,220.2 1046.1,229.7" fill="none" stroke="#588fe9" stroke-width="2.6" stroke-linejoin="round" stroke-linecap="round" />
<polyline points="1000.1,233.9 1009.9,238.6" fill="none" stroke="#588fe9" stroke-width="2.6" stroke-linejoin="round" stroke-linecap="round" />
<polyline points="1119.6,320.0 1128.5,324.3" fill="none" stroke="#588fe9" stroke-width="2.6" stroke-linejoin="round" stroke-linecap="round" />
<polyline points="991.4,191.3 988.1,198.1" fill="none" stroke="#588fe9" stroke-width="2.6" stroke-linejoin="round" stroke-linecap="round" />
<polyline points="1015.9,269.4 1028.1,275.3" fill="none" stroke="#588fe9" stroke-width="2.6" stroke-linejoin="round" stroke-linecap="round" />
<polyline points="991.7,188.1 1001.6,192.9" fill="none" stroke="#588fe9" stroke-width="2.6" stroke-linejoin="round" stroke-linecap="round" />
<polyline points="1019.9,229.6 1027.4,233.3" fill="none" stroke="#588fe9" stroke-width="2.6" stroke-linejoin="round" stroke-linecap="round" />
<polyline points="1085.5,249.3 1081.5,257.5" fill="none" stroke="#588fe9" stroke-width="2.6" stroke-linejoin="round" stroke-linecap="round" />
<polyline points="1107.5,304.7 1104.1,311.5" fill="none" stroke="#588fe9" stroke-width="2.6" stroke-linejoin="round" stroke-linecap="round" />
<polyline points="1029.4,276.0 1037.4,279.8" fill="none" stroke="#588fe9" stroke-width="2.6" stroke-linejoin="round" stroke-linecap="round" />
<polyline points="1097.1,325.9 1094.2,331.8" fill="none" stroke="#588fe9" stroke-width="2.6" stroke-linejoin="round" stroke-linecap="round" />
<polyline points="901.3,185.3 901.3,195.4" fill="none" stroke="#588fe9" stroke-width="2.4" stroke-linejoin="round" stroke-linecap="round" />
<polyline points="878.0,166.5 884.3,166.5" fill="none" stroke="#588fe9" stroke-width="2.4" stroke-linejoin="round" stroke-linecap="round" />
<polyline points="922.3,176.5 922.3,183.4" fill="none" stroke="#588fe9" stroke-width="2.4" stroke-linejoin="round" stroke-linecap="round" />
<polyline points="880.3,165.3 880.3,177.3" fill="none" stroke="#588fe9" stroke-width="2.4" stroke-linejoin="round" stroke-linecap="round" />
<polyline points="948.1,166.5 961.7,166.5" fill="none" stroke="#588fe9" stroke-width="2.4" stroke-linejoin="round" stroke-linecap="round" />
<polyline points="903.9,187.5 913.6,187.5" fill="none" stroke="#588fe9" stroke-width="2.4" stroke-linejoin="round" stroke-linecap="round" />
<polyline points="901.3,173.5 901.3,179.6" fill="none" stroke="#588fe9" stroke-width="2.4" stroke-linejoin="round" stroke-linecap="round" />
<polyline points="926.6,187.5 936.2,187.5" fill="none" stroke="#588fe9" stroke-width="2.4" stroke-linejoin="round" stroke-linecap="round" />
<polyline points="160.0,68.0 277.0,157.0" fill="none" stroke="#b5bcc0" stroke-width="1.3" stroke-linejoin="round" stroke-linecap="round" opacity="0.7" stroke-dasharray="7 5" />
<polyline points="322.0,67.0 322.0,163.0" fill="none" stroke="#b5bcc0" stroke-width="1.3" stroke-linejoin="round" stroke-linecap="round" opacity="0.6" stroke-dasharray="7 5" />
<polyline points="384.0,70.0 396.0,90.0" fill="none" stroke="#555" stroke-width="1.5" stroke-linejoin="round" stroke-linecap="round" opacity="0.7" stroke-dasharray="6 4" />
<g font-family="Liberation Sans, sans-serif">
<text x="999.9" y="85.5" font-size="13" fill="#6f9fc0" font-weight="normal" textLength="115.5" lengthAdjust="spacing" transform="rotate(41.1 999.9 85.5)">Alameda Harbor</text>
<line x1="1416.0" y1="235.0" x2="1536.0" y2="312.0" stroke="#f5f5f2" stroke-width="11.9" stroke-linecap="round" opacity="0.92"/>
<text x="1413.3" y="239.2" font-size="14" fill="#4f4f4f" font-weight="bold" textLength="142.6" lengthAdjust="spacing" transform="rotate(32.7 1413.3 239.2)" stroke="#fbfbf9" stroke-width="2.6" paint-order="stroke" stroke-linejoin="round">International Blvd</text>
<line x1="1521.0" y1="188.0" x2="1608.5" y2="209.6" stroke="#f5f5f2" stroke-width="11.5" stroke-linecap="round" opacity="0.92"/>
<text x="1519.8" y="192.7" font-size="13.5" fill="#777" font-weight="normal" textLength="90.1" lengthAdjust="spacing" transform="rotate(13.9 1519.8 192.7)" stroke="#fbfbf9" stroke-width="2.6" paint-order="stroke" stroke-linejoin="round">Foothill Blvd</text>
<line x1="1377.8" y1="128.4" x2="1418.0" y2="72.8" stroke="#f5f5f2" stroke-width="11.9" stroke-linecap="round" opacity="0.92"/>
<text x="1381.9" y="131.4" font-size="14" fill="#4f4f4f" font-weight="bold" textLength="68.6" lengthAdjust="spacing" transform="rotate(-54.1 1381.9 131.4)" stroke="#fbfbf9" stroke-width="2.6" paint-order="stroke" stroke-linejoin="round">High St</text>
<line x1="1433.0" y1="73.0" x2="1454.6" y2="100.6" stroke="#f5f5f2" stroke-width="11.0" stroke-linecap="round" opacity="0.92"/>
<text x="1429.3" y="75.9" font-size="13" fill="#777" font-weight="normal" textLength="35.0" lengthAdjust="spacing" transform="rotate(52.0 1429.3 75.9)" stroke="#fbfbf9" stroke-width="2.6" paint-order="stroke" stroke-linejoin="round">Ave</text>
<line x1="1326.5" y1="105.0" x2="1365.0" y2="66.0" stroke="#f5f5f2" stroke-width="11.0" stroke-linecap="round" opacity="0.92"/>
<text x="1329.8" y="108.3" font-size="13" fill="#777" font-weight="normal" textLength="54.8" lengthAdjust="spacing" transform="rotate(-45.4 1329.8 108.3)" stroke="#fbfbf9" stroke-width="2.6" paint-order="stroke" stroke-linejoin="round">38th Ave</text>
<line x1="1337.0" y1="158.0" x2="1386.0" y2="190.0" stroke="#f5f5f2" stroke-width="11.5" stroke-linecap="round" opacity="0.92"/>
<text x="1334.3" y="162.1" font-size="13.5" fill="#777" font-weight="normal" textLength="58.5" lengthAdjust="spacing" transform="rotate(33.1 1334.3 162.1)" stroke="#fbfbf9" stroke-width="2.6" paint-order="stroke" stroke-linejoin="round">Bond St</text>
<line x1="1324.0" y1="220.0" x2="1405.5" y2="305.7" stroke="#f5f5f2" stroke-width="11.5" stroke-linecap="round" opacity="0.92"/>
<text x="1320.5" y="223.3" font-size="13.5" fill="#8c8c8c" font-weight="normal" textLength="118.3" lengthAdjust="spacing" transform="rotate(46.4 1320.5 223.3)" stroke="#fbfbf9" stroke-width="2.6" paint-order="stroke" stroke-linejoin="round">San Leandro St</text>
<line x1="1271.0" y1="211.7" x2="1322.0" y2="284.0" stroke="#f5f5f2" stroke-width="11.9" stroke-linecap="round" opacity="0.92"/>
<text x="1266.9" y="214.6" font-size="14" fill="#4a4a4a" font-weight="bold" textLength="88.5" lengthAdjust="spacing" transform="rotate(54.8 1266.9 214.6)" stroke="#fbfbf9" stroke-width="2.6" paint-order="stroke" stroke-linejoin="round">Nimitz Fwy</text>
<line x1="1503.8" y1="258.7" x2="1559.0" y2="218.0" stroke="#f5f5f2" stroke-width="11.5" stroke-linecap="round" opacity="0.92"/>
<text x="1506.7" y="262.6" font-size="13.5" fill="#777" font-weight="normal" textLength="68.6" lengthAdjust="spacing" transform="rotate(-36.4 1506.7 262.6)" stroke="#fbfbf9" stroke-width="2.6" paint-order="stroke" stroke-linejoin="round">64th Ave</text>
<line x1="1619.0" y1="260.8" x2="1676.8" y2="216.0" stroke="#f5f5f2" stroke-width="11.9" stroke-linecap="round" opacity="0.92"/>
<text x="1622.1" y="264.8" font-size="14" fill="#4f4f4f" font-weight="bold" textLength="73.1" lengthAdjust="spacing" transform="rotate(-37.8 1622.1 264.8)" stroke="#fbfbf9" stroke-width="2.6" paint-order="stroke" stroke-linejoin="round">73rd Ave</text>
<line x1="1636.0" y1="269.4" x2="1730.0" y2="297.0" stroke="#f5f5f2" stroke-width="11.9" stroke-linecap="round" opacity="0.92"/>
<text x="1634.6" y="274.2" font-size="14" fill="#4f8f96" font-weight="bold" textLength="98.0" lengthAdjust="spacing" transform="rotate(16.4 1634.6 274.2)" stroke="#fbfbf9" stroke-width="2.6" paint-order="stroke" stroke-linejoin="round">Arroyo Viejo</text>
<text x="1550.7" y="96.7" font-size="13" fill="#666" font-weight="normal" textLength="85.3" lengthAdjust="spacing" transform="rotate(0.0 1550.7 96.7)">Mills College</text>
<text x="1805.0" y="79.7" font-size="13" fill="#7fa468" font-weight="normal" textLength="57.7" lengthAdjust="spacing" transform="rotate(0.0 1805.0 79.7)">Regional</text>
<text x="1792.0" y="97.7" font-size="13" fill="#7fa468" font-weight="normal" textLength="78.0" lengthAdjust="spacing" transform="rotate(0.0 1792.0 97.7)">Open Space</text>
<line x1="1813.0" y1="200.0" x2="1873.0" y2="305.7" stroke="#f5f5f2" stroke-width="11.5" stroke-linecap="round" opacity="0.92"/>
<text x="1808.8" y="202.4" font-size="13.5" fill="#666" font-weight="normal" textLength="121.5" lengthAdjust="spacing" transform="rotate(60.4 1808.8 202.4)" stroke="#fbfbf9" stroke-width="2.6" paint-order="stroke" stroke-linejoin="round">Mountain Blvd</text>
<line x1="1869.0" y1="325.0" x2="1912.0" y2="279.0" stroke="#f5f5f2" stroke-width="11.9" stroke-linecap="round" opacity="0.92"/>
<text x="1872.7" y="328.4" font-size="14" fill="#4f8f96" font-weight="bold" textLength="63.0" lengthAdjust="spacing" transform="rotate(-46.9 1872.7 328.4)" stroke="#fbfbf9" stroke-width="2.6" paint-order="stroke" stroke-linejoin="round">Country</text>
<line x1="1850.0" y1="378.0" x2="1907.0" y2="344.0" stroke="#f5f5f2" stroke-width="11.0" stroke-linecap="round" opacity="0.92"/>
<text x="1852.4" y="382.0" font-size="13" fill="#9a9a9a" font-weight="normal" textLength="66.4" lengthAdjust="spacing" transform="rotate(-30.8 1852.4 382.0)" stroke="#fbfbf9" stroke-width="2.6" paint-order="stroke" stroke-linejoin="round">Golf links</text>
<line x1="1773.0" y1="340.0" x2="1796.0" y2="408.0" stroke="#f5f5f2" stroke-width="11.0" stroke-linecap="round" opacity="0.92"/>
<text x="1768.6" y="341.5" font-size="13" fill="#9a9a9a" font-weight="normal" textLength="71.8" lengthAdjust="spacing" transform="rotate(71.3 1768.6 341.5)" stroke="#fbfbf9" stroke-width="2.6" paint-order="stroke" stroke-linejoin="round">Landon</text>
<line x1="1251.7" y1="100.0" x2="1267.0" y2="60.0" stroke="#f5f5f2" stroke-width="11.9" stroke-linecap="round" opacity="0.92"/>
<text x="1256.4" y="101.8" font-size="14" fill="#4f4f4f" font-weight="bold" textLength="42.8" lengthAdjust="spacing" transform="rotate(-69.1 1256.4 101.8)" stroke="#fbfbf9" stroke-width="2.6" paint-order="stroke" stroke-linejoin="round">Fruitv</text>
<text x="1083.5" y="244.8" font-size="19" fill="#222" font-weight="normal" textLength="75.5" lengthAdjust="spacing" transform="rotate(0.0 1083.5 244.8)" stroke="#fbfbf9" stroke-width="2.6" paint-order="stroke" stroke-linejoin="round">Alameda</text>
<text x="157.8" y="72.9" font-size="10" fill="#a9b4ba" font-weight="normal" textLength="45.0" lengthAdjust="spacing" transform="rotate(36.9 157.8 72.9)">Bay Fry</text>
<text x="1028.0" y="175.8" font-size="12" fill="#8a8a8a" font-weight="normal" textLength="47.4" lengthAdjust="spacing" transform="rotate(27.6 1028.0 175.8)" opacity="0.8">Clement</text>
<text x="1108.2" y="198.1" font-size="12" fill="#8a8a8a" font-weight="normal" textLength="41.2" lengthAdjust="spacing" transform="rotate(60.9 1108.2 198.1)" opacity="0.8">Ave</text>
<text x="956.0" y="161.8" font-size="12" fill="#8a8a8a" font-weight="normal" textLength="59.1" lengthAdjust="spacing" transform="rotate(28.3 956.0 161.8)" opacity="0.8">Pacific Av</text>
<text x="1232.1" y="296.7" font-size="11" fill="#9a9a9a" font-weight="normal" textLength="22.4" lengthAdjust="spacing" transform="rotate(79.7 1232.1 296.7)" opacity="0.7">Blvd</text>
<text x="944.3" y="316.6" font-size="13" fill="#a0a0a0" font-weight="normal" textLength="40.4" lengthAdjust="spacing" transform="rotate(8.5 944.3 316.6)" opacity="0.8">Otis Dr</text>
<text x="1183.8" y="208.1" font-size="10.5" fill="#6fa5c4" font-weight="normal" textLength="60.2" lengthAdjust="spacing" transform="rotate(35.5 1183.8 208.1)" opacity="0.85">Tidal Canal</text>
<rect x="1122.5" y="93.2" width="27" height="19" rx="3.5" fill="#f4f4f2" stroke="#8a8a8a" stroke-width="1.4"/>
<text x="1136" y="107.3" font-size="12.5" fill="#666" text-anchor="middle">880</text>
<rect x="1287.3" y="185.1" width="21" height="19" rx="3.5" fill="#f4f4f2" stroke="#8a8a8a" stroke-width="1.4"/>
<text x="1297.8" y="199.2" font-size="12.5" fill="#666" text-anchor="middle">77</text>
<rect x="1371.9" y="209.0" width="27" height="19" rx="3.5" fill="#f4f4f2" stroke="#8a8a8a" stroke-width="1.4"/>
<text x="1385.4" y="223.1" font-size="12.5" fill="#666" text-anchor="middle">185</text>
</g>
<g transform="rotate(2.7 1050 364)"><rect x="-200" y="209" width="2400" height="157" fill="url(#fade)"/><rect x="-200" y="365" width="2400" height="200" fill="#fff"/></g>
<rect x="13" y="159" width="491" height="270" fill="#fff" opacity="0.8" filter="url(#b3)"/>
<rect x="4" y="200" width="10" height="90" fill="url(#heroL)"/><rect x="4" y="289" width="10" height="120" fill="#fff"/>
</svg>
</div>
<div id="hdr">
<svg id="bulb" style="position:absolute;left:22px;top:0" width="70" height="66" viewBox="26 1 70 66" fill="none" stroke="#e6ecf7" stroke-width="1.6" stroke-linecap="round" stroke-linejoin="round">
<path d="M51.5 49 C51 42 47 37 43 32 C39.5 27.5 38.8 23 39 20 C39.6 8.5 48 1.5 59.3 1.5 C70.6 1.5 79 8.5 79.6 20 C79.8 23 79 27.5 75.5 32 C71.5 37 68 42 67.8 49"/>
<rect x="51" y="49.5" width="17.2" height="12.6" rx="1.5"/>
<path d="M51.5 53.7 H68 M51.5 57.8 H68"/>
<rect x="57" y="18" width="10.6" height="31" />
<path d="M59.4 22.5 H65.2 M59.4 27 H65.2 M59.4 31.5 H65.2 M59.4 36 H65.2 M59.4 40.5 H65.2 M59.4 45 H65.2" stroke-width="2.4"/>
<path d="M45.6 15 V25.5 H57 M47 29 H57 M48.5 32.5 H57 M50 36 H57 M51.5 39.5 H57 M52.5 43 H57 M53.5 46.5 H57" stroke-width="1.3"/>
<path d="M67.6 21 H71 V16 M71 21 V35 M73.2 17 V26 L71 30 M75 17.5 V23" stroke-width="1.3"/>
<path d="M30.6 22 H35.5 M83.5 22 H88 M34.3 8 L38 10.4 M84.2 8 L80.6 10.4" stroke-width="2"/>
</svg>

</div>
<div class="b" id="sideline" style="left:337px;top:406px;width:1px;height:661px;background:#e3e3e3"></div>
<div class="b" id="navsel" style="left:1px;top:466.5px;width:326px;height:60px;background:#453e3d;border-radius:6px"></div>
<svg class="b" id="collapse" style="left:294px;top:431px" width="22" height="18" viewBox="0 0 22 18"><path d="M9 1.75 L2 8.4 L9 15 M19.5 1.75 L12.4 8.4 L19.5 15" fill="none" stroke="#666" stroke-width="1.7"/></svg>
<svg class="b" id="navarrow" style="left:289px;top:673px" width="12" height="14" viewBox="0 0 12 14"><path d="M1.6 1.6 L9.4 6.7 L1.6 12.3 Z" fill="#858585"/></svg>
<div class="b" id="badge" style="left:605.6px;top:542px;width:140px;height:27.5px;background:#5e5e5e;border-radius:5px"></div>
<div class="b" id="copybtn" style="left:1701.4px;top:492px;width:185px;height:44.5px;background:#f2f2f2;border:1px solid #b9b9b9;border-radius:2px"></div>
<div class="hr" style="top:681px"></div>
<div class="hr" style="top:991px"></div>
<div class="b" id="mapctl" style="left:1819px;top:88.7px;width:44.2px;height:132.3px;background:#fff;box-shadow:0 1px 3px rgba(0,0,0,.28)"></div>
<div class="b" style="left:1819px;top:132px;width:44.2px;height:1px;background:#e2e2e2"></div>
<div class="b" style="left:1819px;top:176.9px;width:44.2px;height:1px;background:#e2e2e2"></div>
<svg class="b" id="mapico" style="left:1819px;top:88.7px" width="45" height="133" viewBox="1823 89.7 45 133" fill="none" stroke="#6e6e6e" stroke-width="1.3"><path d="M1835 111 H1855.2 M1845.1 100.8 V121.2 M1835 155.5 H1855.2"/><circle cx="1845.1" cy="200" r="9.8"/><path d="M1845.1 193.6 V203.6" stroke-width="1.5"/><circle cx="1845.1" cy="205.6" r="0.9" fill="#6e6e6e" stroke="none"/></svg>
<div class="b" id="herodiv" style="left:205.5px;top:246.5px;width:1px;height:29px;background:#d9dfe4"></div>

<div class="t" id="l_city" style="left:95.60px;top:1.22px;font-size:19px;color:#dde4f0;transform:scaleX(1.1912);-webkit-text-stroke:0.4px #dde4f0;">City of</div>
<div class="t" id="l_inno" style="left:92.92px;top:22.04px;font-size:38.7px;color:#f4f6fa;transform:scaleX(1.2252);-webkit-text-stroke:0.5px #f4f6fa;">INNOVATION</div>
<h1 class="t" id="h_title" style="left:13.52px;top:186.71px;font-size:38.5px;color:#333;transform:scaleX(0.9942);-webkit-text-stroke:0.9px #f1f8fe;">Planning Application</h1>
<div class="t" id="h_id" style="left:16.00px;top:249.68px;font-size:22px;color:#3a3a3a;transform:scaleX(1.0835);">ADU-2024-0020</div>
<div class="t" id="h_type" style="left:226.50px;top:251.79px;font-size:19.5px;color:#444;transform:scaleX(1.0561);">Accessory Dwelling Unit</div>
<div class="t" id="h_a1" style="left:14.95px;top:294.69px;font-size:19.5px;color:#464646;transform:scaleX(1.0525);">1217 Walnut Street</div>
<div class="t" id="h_a2" style="left:16.00px;top:321.29px;font-size:19.5px;color:#464646;transform:scaleX(1.0277);">ALAMEDA, California 94501</div>
<div class="t" id="s0" style="left:18.00px;top:489.51px;font-size:18.3px;color:#fff;transform:scaleX(1.0262);">Overview</div>
<div class="t" id="s1" style="left:22.16px;top:550.01px;font-size:18.3px;color:#4c4c4c;transform:scaleX(1.0875);">Property Information</div>
<div class="t" id="s2" style="left:23.00px;top:612.01px;font-size:18.3px;color:#4c4c4c;transform:scaleX(1.0644);">Workflow</div>
<div class="t" id="s3" style="left:21.92px;top:672.81px;font-size:18.3px;color:#4c4c4c;transform:scaleX(1.0765);">Planning Application</div>
<div class="t" id="s4" style="left:22.00px;top:734.51px;font-size:18.3px;color:#4c4c4c;transform:scaleX(1.0034);">Fees and Payments</div>
<div class="t" id="s5" style="left:23.00px;top:795.51px;font-size:18.3px;color:#4c4c4c;transform:scaleX(1.0728);">Communication</div>
<div class="t" id="s6" style="left:21.99px;top:856.81px;font-size:18.3px;color:#4c4c4c;transform:scaleX(1.0145);">Related Transactions</div>
<h2 class="t" id="m_h1" style="left:365.47px;top:440.60px;font-size:34.5px;color:#333;transform:scaleX(0.9303);-webkit-text-stroke:0.8px #fff;">Overview</h2>
<div class="t" id="m_status" style="left:540.00px;top:548.91px;font-size:18.3px;color:#767676;transform:scaleX(0.9945);">Status</div>
<div class="t" id="m_appr" style="left:633.50px;top:548.11px;font-size:18.3px;color:#fff;transform:scaleX(1.0922);">Approved</div>
<div class="t" id="m_subl" style="left:477.70px;top:590.51px;font-size:18.3px;color:#767676;transform:scaleX(1.0376);">Submitted By</div>
<div class="t" id="m_subv" style="left:605.72px;top:590.51px;font-size:18.3px;color:#464646;transform:scaleX(1.0767);">Brandon Wood on 12/9/24</div>
<div class="t" id="m_pdl" style="left:430.73px;top:641.01px;font-size:18.3px;color:#767676;transform:scaleX(1.0658);">Project Description</div>
<div class="t" id="m_pdv" style="left:606.92px;top:641.01px;font-size:18.3px;color:#464646;transform:scaleX(1.0822);">Pre-application meeting</div>
<span class="t" id="m_copy" style="left:1720.00px;top:506.81px;font-size:18.3px;color:#333;transform:scaleX(1.0792);">Copy Application</span>
<div class="t" id="m_expl" style="left:1232.45px;top:548.51px;font-size:18.3px;color:#767676;transform:scaleX(1.0539);">Expiration Date</div>
<div class="t" id="m_expv" style="left:1377.39px;top:548.51px;font-size:18.3px;color:#464646;transform:scaleX(1.1115);">12/9/26</div>
<h2 class="t" id="m_h2" style="left:365.43px;top:698.98px;font-size:27.2px;color:#3a3a3a;transform:scaleX(0.9660);-webkit-text-stroke:0.55px #fff;">Contacts</h2>
<a class="t" id="m_vd" style="left:366.40px;top:747.22px;font-size:21px;color:#1f6fa5;transform:scaleX(0.9733);">View Details</a>
<div class="t" id="m_pcl" style="left:454.96px;top:797.51px;font-size:18.3px;color:#767676;transform:scaleX(1.0418);">Primary Contact</div>
<div class="t" id="m_pcv" style="left:605.73px;top:797.51px;font-size:18.3px;color:#464646;transform:scaleX(1.0711);">Brandon Wood</div>
<div class="t" id="m_phl" style="left:536.97px;top:841.51px;font-size:18.3px;color:#767676;transform:scaleX(1.0330);">Phone</div>
<div class="t" id="m_phv" style="left:606.80px;top:841.51px;font-size:18.3px;color:#464646;transform:scaleX(1.0360);">+1 (201) 870-3491</div>
<div class="t" id="m_eml" style="left:545.37px;top:883.51px;font-size:18.3px;color:#767676;transform:scaleX(1.0309);">Email</div>
<div class="t" id="m_emv" style="left:605.74px;top:883.51px;font-size:18.3px;color:#464646;transform:scaleX(1.0555);">brandon.wood_etap-dev22@oraclepdemos.com</div>
<div class="t" id="m_adl" style="left:523.50px;top:926.81px;font-size:18.3px;color:#767676;transform:scaleX(1.0146);">Address</div>
<div class="t" id="m_ad1" style="left:605.76px;top:926.81px;font-size:18.3px;color:#464646;transform:scaleX(1.0403);">1217 Walnut St</div>
<div class="t" id="m_ad2" style="left:606.80px;top:953.11px;font-size:18.3px;color:#464646;transform:scaleX(1.0275);">Alameda, California 94501</div>
<h2 class="t" id="m_h3" style="left:366.40px;top:1010.98px;font-size:27.2px;color:#3a3a3a;transform:scaleX(0.9995);-webkit-text-stroke:0.55px #fff;">Workflow</h2>
<a class="t" id="m_vd2" style="left:366.40px;top:1059.22px;font-size:21px;color:#1f6fa5;transform:scaleX(0.9733);">View Details</a>
<div class="t" id="m_apl" style="left:1273.00px;top:806.81px;font-size:18.3px;color:#767676;transform:scaleX(1.0782);">Applicant</div>
<div class="t" id="m_apv" style="left:1376.92px;top:806.81px;font-size:18.3px;color:#464646;transform:scaleX(1.0760);">Brandon  Wood</div>
</div>
<div id="sb"><i></i><b style="position:absolute;left:3.5px;top:1px;width:0;height:0;border-left:2.5px solid transparent;border-right:2.5px solid transparent;border-bottom:3px solid #777"></b><b style="position:absolute;left:3.5px;top:1062px;width:0;height:0;border-left:2.5px solid transparent;border-right:2.5px solid transparent;border-top:3px solid #777"></b></div>
</body>
</html>
